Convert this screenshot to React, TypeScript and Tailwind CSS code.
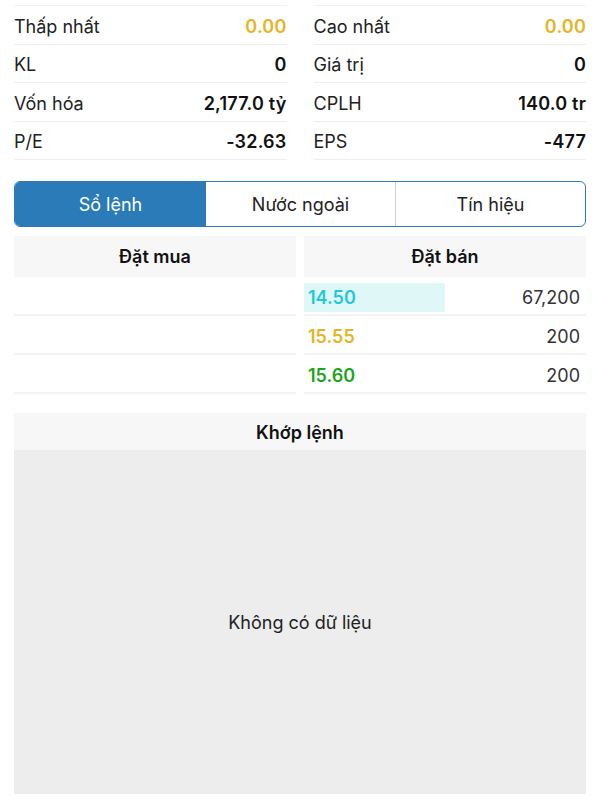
import React from "react";

const stats: [string, string, string][][] = [
  [
    ["Thấp nhất", "0.00", "y"],
    ["KL", "0", ""],
    ["Vốn hóa", "2,177.0 tỷ", ""],
    ["P/E", "-32.63", ""],
  ],
  [
    ["Cao nhất", "0.00", "y"],
    ["Giá trị", "0", ""],
    ["CPLH", "140.0 tr", ""],
    ["EPS", "-477", ""],
  ],
];

export default function App() {
  return (
    <div
      className="w-[600px] h-[800px] bg-white overflow-hidden text-[#1c1c1e] px-[14px]"
      style={{ fontFamily: "Inter, 'Noto Sans', sans-serif" }}
    >
      <div className="grid grid-cols-2 gap-x-[27px] pt-[5px]">
        {stats.map((col, ci) => (
          <div key={ci} className="border-t border-[#f0f0f0]">
            {col.map(([label, value, c]) => (
              <div
                key={label}
                className="h-[38.5px] pt-[3px] flex items-center justify-between border-b border-[#eeeeee] text-[18px]"
              >
                <span className="text-[#222]">{label}</span>
                <span className={`font-semibold tracking-[0.2px] ${c === "y" ? "text-[#e6b422]" : "text-[#111]"}`}>{value}</span>
              </div>
            ))}
          </div>
        ))}
      </div>

      <div className="mt-[21px] h-[46px] flex border border-[#2a7bb8] rounded-[6px] overflow-hidden text-[18px]">
        <div className="w-[191px] bg-[#2a7bb8] text-white flex items-center justify-center">Sổ lệnh</div>
        <div className="flex-1 flex items-center justify-center text-[#222] border-r border-[#cfcfcf]">Nước ngoài</div>
        <div className="flex-1 flex items-center justify-center text-[#222]">Tín hiệu</div>
      </div>

      <div className="mt-[9px] grid grid-cols-2 gap-x-[8px]">
        <div>
          <div className="h-[41px] bg-[#f7f7f7] flex items-center justify-center font-semibold text-[18px] text-[#111]">Đặt mua</div>
          {[0, 1, 2].map((i) => (
            <div key={i} className="h-[39px] border-b-2 border-[#f3f3f3]" />
          ))}
        </div>
        <div>
          <div className="h-[41px] bg-[#f7f7f7] flex items-center justify-center font-semibold text-[18px] text-[#111]">Đặt bán</div>
          {[
            ["14.50", "67,200", "text-[#1fc8d6]", true],
            ["15.55", "200", "text-[#e6b422]", false],
            ["15.60", "200", "text-[#1ba51b]", false],
          ].map(([p, v, cls, hl], i) => (
            <div key={i} className="h-[39px] pt-[4px] border-b-2 border-[#f3f3f3] flex items-center relative text-[18px]">
              {hl ? <div className="absolute left-0 top-[6px] w-[141px] h-[29px] bg-[#dff7f7]" /> : null}
              <span className={`relative pl-[4px] font-semibold ${cls as string}`}>{p as string}</span>
              <span className="relative ml-auto pr-[6px] text-[#333]">{v as string}</span>
            </div>
          ))}
        </div>
      </div>

      <div className="mt-[19px]">
        <div className="h-[37px] pt-[2px] bg-[#f7f7f7] flex items-center justify-center font-semibold text-[18px] text-[#111]">Khớp lệnh</div>
        <div className="h-[344px] bg-[#ededed] flex items-center justify-center text-[18px] text-[#222]">Không có dữ liệu</div>
      </div>
    </div>
  );
}
